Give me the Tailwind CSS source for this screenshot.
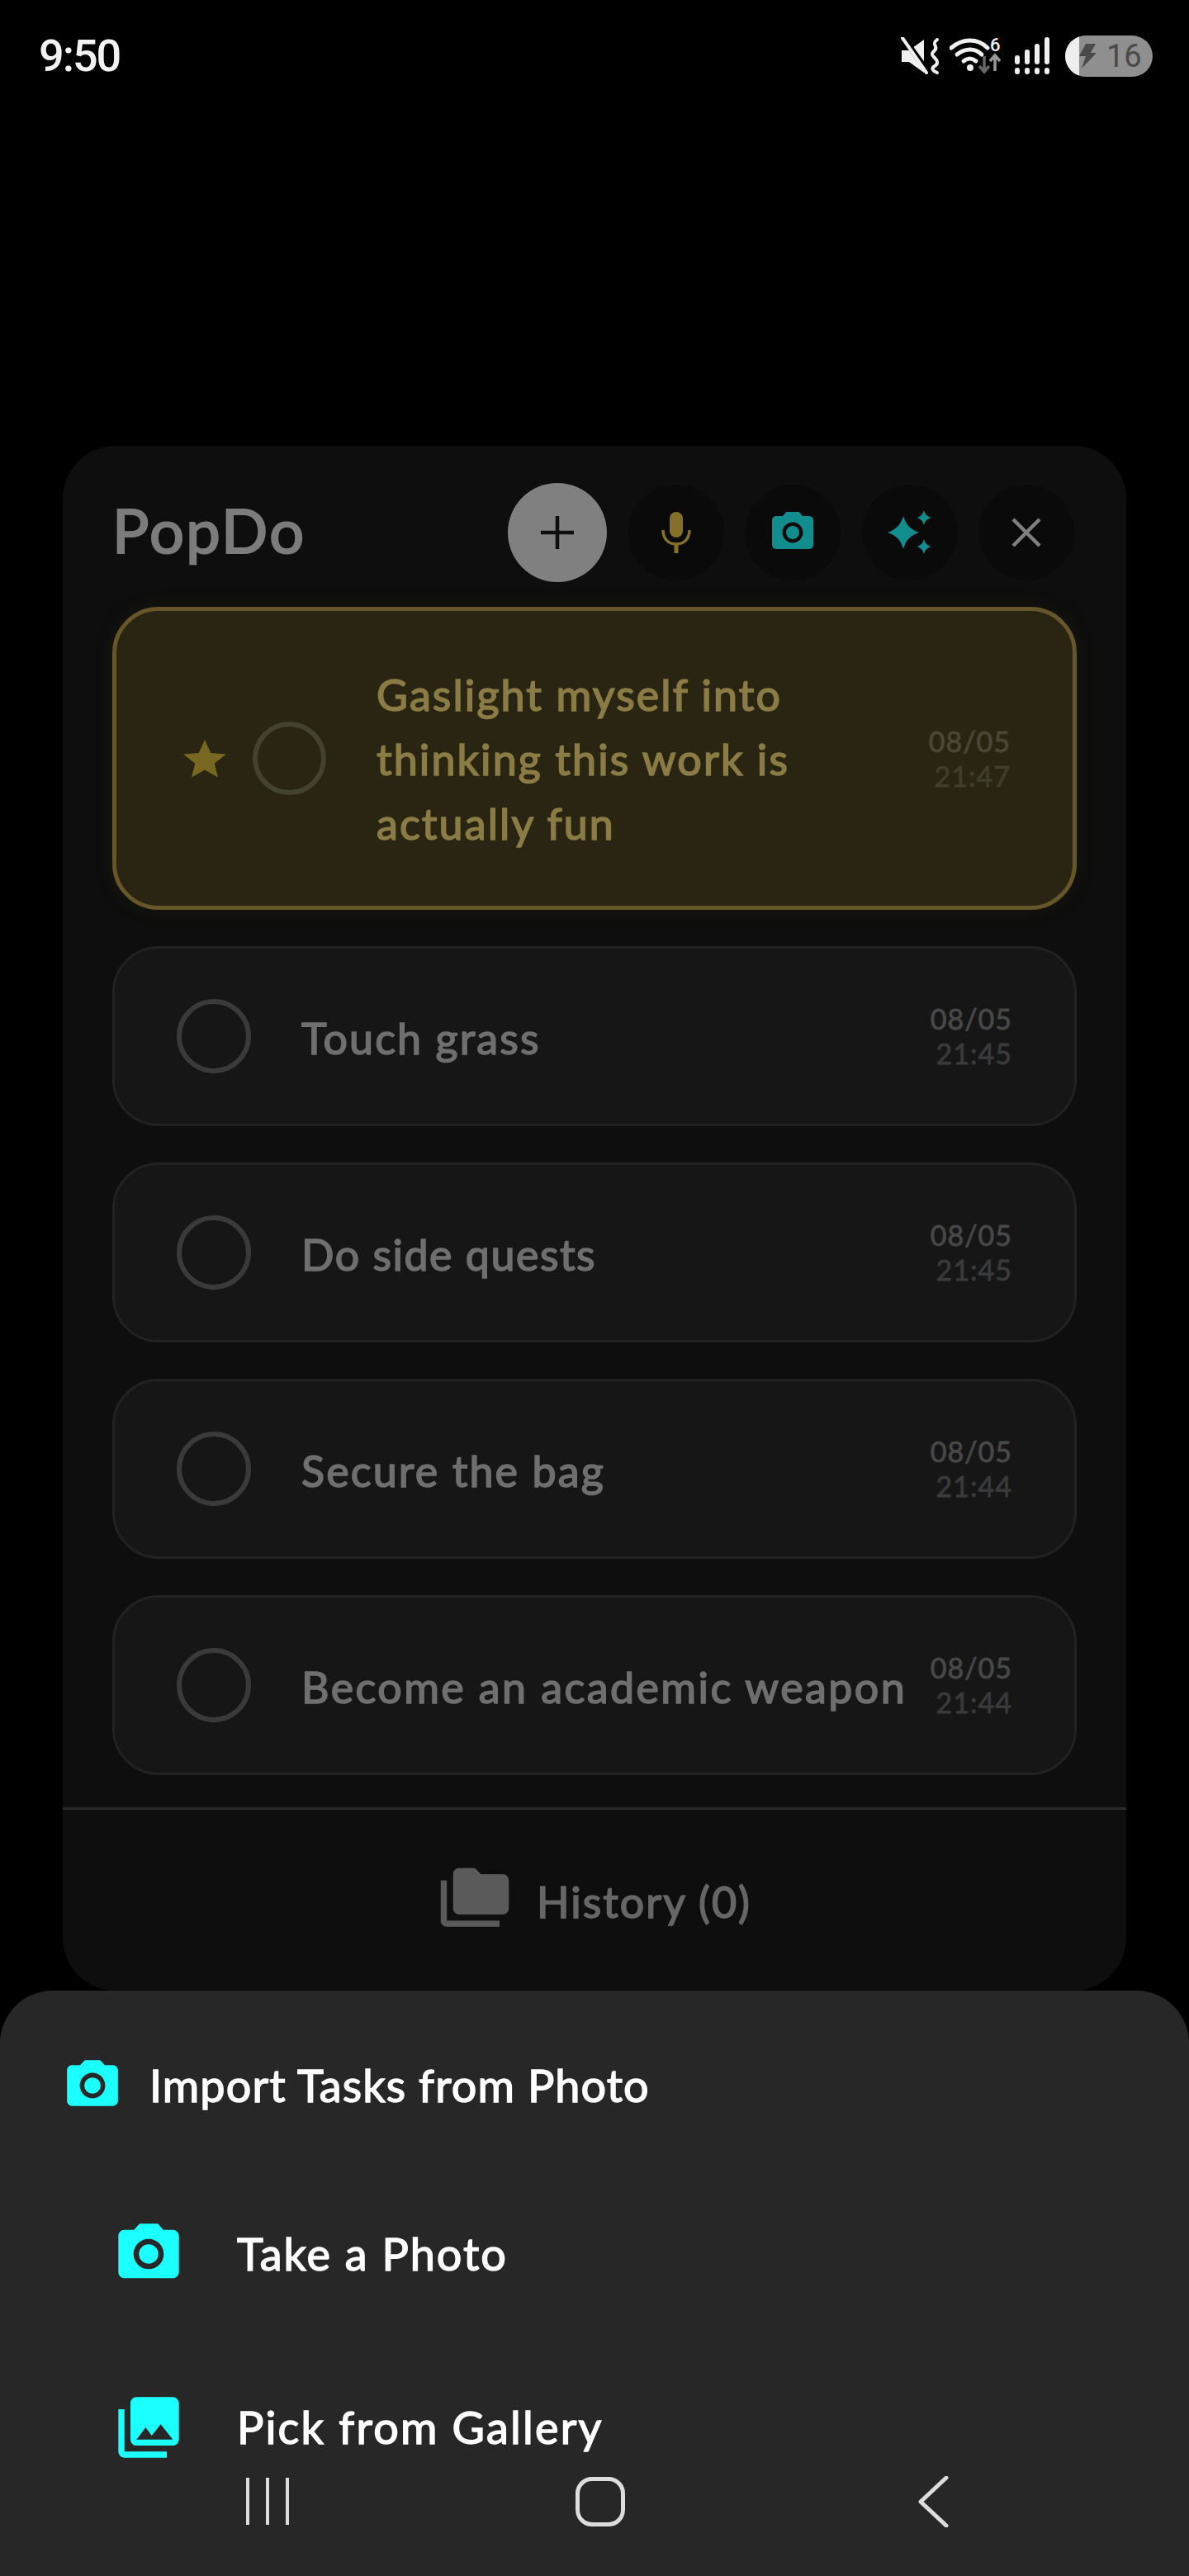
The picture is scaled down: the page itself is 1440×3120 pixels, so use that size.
<!DOCTYPE html>
<html lang="en">
<head>
  <meta charset="UTF-8" />
  <meta name="viewport" content="width=device-width, initial-scale=1.0" />
  <title>PopDo</title>
  <script src="https://cdn.jsdelivr.net/npm/@tailwindcss/browser@4"></script>
</head>
<body class="bg-black font-['Lato','Noto_Sans',sans-serif]">
  <div class="relative w-[1440px] h-[3120px] overflow-hidden bg-black flex flex-col">

    <!-- status bar -->
    <div class="h-[540px] shrink-0">
      <div class="flex items-center justify-between pl-[47px] pr-[44px] pt-[43px] h-[92px]">
        <span class="font-['Roboto',sans-serif] font-medium text-[54px] leading-none text-[#f2f2f2] tracking-[-2px]">9:50</span>
        <div class="flex items-center">
          <svg class="w-[48px] h-[46px]" viewBox="0 0 48 46" fill="none">
            <path d="M1 16h9L28 3v40L10 30H1z" fill="#f0f0f0"/>
            <path d="M4 2l26 36" stroke="#000" stroke-width="7"/>
            <path d="M2 1l29 42" stroke="#f0f0f0" stroke-width="4" stroke-linecap="round"/>
            <path d="M44 3c-8 6 2 8-3 13s-3 6 0 9 5 7 0 10-2 6 3 8" stroke="#f0f0f0" stroke-width="4" stroke-linecap="round"/>
          </svg>
          <div class="ml-[11px] relative w-[64px] h-[48px]">
            <svg class="w-[64px] h-[48px]" viewBox="0 0 64 48" fill="none">
              <path d="M2 14c14-12 32-12 44 0" stroke="#f0f0f0" stroke-width="5" stroke-linecap="round"/>
              <path d="M9 22c10-8 22-8 30 0" stroke="#f0f0f0" stroke-width="5" stroke-linecap="round"/>
              <path d="M17 30c5-4 10-4 15 0" stroke="#f0f0f0" stroke-width="5" stroke-linecap="round"/>
              <circle cx="25" cy="38" r="4" fill="#f0f0f0"/>
              <path d="M42 24v18M36 36l6 7 6-7" stroke="#666" stroke-width="3.5"/>
              <path d="M55 42V24M49 30l6-7 6 7" stroke="#9a9a9a" stroke-width="3.5"/>
            </svg>
            <span class="absolute left-[49px] top-[-1px] font-['Roboto',sans-serif] font-medium text-[22px] leading-[24px] text-[#f0f0f0]">6</span>
          </div>
          <svg class="ml-[14px] w-[44px] h-[46px]" viewBox="0 0 44 46" fill="#f0f0f0">
            <rect x="1" y="22" width="6" height="11" rx="3"/><rect x="1" y="37" width="6" height="8" rx="3"/>
            <rect x="13" y="15" width="6" height="18" rx="3"/><rect x="13" y="37" width="6" height="8" rx="3"/>
            <rect x="25" y="8" width="6" height="25" rx="3"/><rect x="25" y="37" width="6" height="8" rx="3"/>
            <rect x="37" y="0" width="6" height="33" rx="3"/><rect x="37" y="37" width="6" height="8" rx="3"/>
          </svg>
          <div class="ml-[18px] relative w-[106px] h-[50px] rounded-full bg-[#8f8f8f] overflow-hidden flex items-center pl-[16px] gap-[12px]">
            <div class="absolute left-0 top-0 bottom-0 w-[17px] bg-[#eeeeee]"></div>
            <svg class="relative w-[22px] h-[30px]" viewBox="0 0 22 30" fill="#4a4a4a"><path d="M9 0h12l-6 11h7L4 30l5-15H1z"/></svg>
            <span class="font-['Roboto',sans-serif] text-[38px] leading-none text-[#4a4a4a]">16</span>
          </div>
        </div>
      </div>
    </div>

    <!-- PopDo card -->
    <div class="ml-[76px] w-[1288px] h-[1871px] shrink-0 rounded-[64px] bg-[#0e0e0e] flex flex-col">
      <div class="h-[195px] shrink-0 pt-[45px] pl-[60px] pr-[63px] flex items-start justify-between">
        <span class="mt-[3px] text-[74px] leading-[108px] text-[#7c7c7c] tracking-[2.4px] [-webkit-text-stroke:2.2px_currentColor]">PopDo</span>
        <div class="flex items-center gap-[25.5px]">
          <button class="w-[120px] h-[120px] rounded-full bg-[#808080] flex items-center justify-center">
            <svg class="w-[42px] h-[42px]" viewBox="0 0 42 42"><path d="M21 1v40M1 21h40" stroke="#0e0e0e" stroke-width="4.5"/></svg>
          </button>
          <button class="w-[116px] h-[116px] rounded-full bg-[#0a0a0a] flex items-center justify-center">
            <svg class="w-[36px] h-[50px]" viewBox="0 0 36 50" fill="none">
              <rect x="10" y="0" width="16" height="31" rx="8" fill="#85702a"/>
              <path d="M2 22c0 11 7 17 16 17s16-6 16-17" stroke="#85702a" stroke-width="3.5"/>
              <path d="M18 38v12" stroke="#85702a" stroke-width="5"/>
            </svg>
          </button>
          <button class="w-[116px] h-[116px] rounded-full bg-[#0a0a0a] flex items-center justify-center">
            <svg class="w-[60px] h-[60px]" viewBox="0 0 24 24" fill="#118d8e"><circle cx="12" cy="12" r="3.2"/><path d="M9 2L7.17 4H4c-1.1 0-2 .9-2 2v12c0 1.1.9 2 2 2h16c1.1 0 2-.9 2-2V6c0-1.1-.9-2-2-2h-3.17L15 2H9zm3 15c-2.76 0-5-2.24-5-5s2.24-5 5-5 5 2.24 5 5-2.24 5-5 5z"/></svg>
          </button>
          <button class="w-[116px] h-[116px] rounded-full bg-[#0a0a0a] flex items-center justify-center">
            <svg class="w-[54px] h-[54px]" viewBox="0 0 54 54" fill="#118d8e">
              <path d="M19 7c3 10 8 16 19 20-11 4-16 9-19 20-3-11-8-16-19-20 11-4 16-10 19-20z"/>
              <path d="M44 0c1.5 5 3.5 7.5 9 9-5.5 1.5-7.5 4-9 9-1.5-5-3.5-7.5-9-9 5.5-1.5 7.5-4 9-9z"/>
              <path d="M44 35c1.5 5 3.5 7.5 9 9-5.5 1.5-7.5 4-9 9-1.5-5-3.5-7.5-9-9 5.5-1.5 7.5-4 9-9z"/>
            </svg>
          </button>
          <button class="w-[116px] h-[116px] rounded-full bg-[#0a0a0a] flex items-center justify-center">
            <svg class="w-[36px] h-[36px]" viewBox="0 0 36 36"><path d="M2 2l32 32M34 2L2 34" stroke="#808080" stroke-width="4.5"/></svg>
          </button>
        </div>
      </div>

      <div class="px-[60px] flex flex-col gap-[44px]">
        <!-- starred task -->
        <div class="h-[367px] rounded-[56px] border-[5px] border-[#665629] bg-[#2a2512] shadow-[0_0_24px_rgba(95,80,37,0.12)] flex items-center pl-[80px] pr-[75px]">
          <svg class="w-[54px] h-[50px] shrink-0" viewBox="0 0 24 24" preserveAspectRatio="none" fill="#776720"><path d="M12 1l3.2 7.6 8.3.7-6.3 5.4 1.9 8.1L12 18.5l-7.1 4.3 1.9-8.1L.5 9.3l8.3-.7z"/></svg>
          <div class="ml-[31px] w-[89px] h-[89px] rounded-full border-[6px] border-[#43412f] shrink-0"></div>
          <div class="ml-[61px] flex-1 text-[52px] leading-[78px] text-[#8a7c45] tracking-[2.1px] [-webkit-text-stroke:1.6px_currentColor]">Gaslight myself into<br>thinking this work is<br>actually fun</div>
          <div class="text-right text-[34px] leading-[42px] tracking-[1px] text-[#4a4737] [-webkit-text-stroke:0.8px_currentColor]">08/05<br><span class="text-[#3f3d2c]">21:47</span></div>
        </div>

        <!-- tasks -->
        <div class="h-[218px] rounded-[56px] border-[3px] border-[#222222] bg-[#161616] flex items-center pl-[75px] pr-[75px]">
          <div class="w-[90px] h-[90px] rounded-full border-[6px] border-[#3a3a3a] shrink-0"></div>
          <div class="ml-[61px] flex-1 pt-[3px] text-[52px] leading-[78px] text-[#6f6f6f] tracking-[2.1px] [-webkit-text-stroke:1.6px_currentColor]">Touch grass</div>
          <div class="text-right text-[34px] leading-[42px] tracking-[1px] text-[#484848] [-webkit-text-stroke:0.8px_currentColor]">08/05<br><span class="text-[#3a3a3a]">21:45</span></div>
        </div>
        <div class="h-[218px] rounded-[56px] border-[3px] border-[#222222] bg-[#161616] flex items-center pl-[75px] pr-[75px]">
          <div class="w-[90px] h-[90px] rounded-full border-[6px] border-[#3a3a3a] shrink-0"></div>
          <div class="ml-[61px] flex-1 pt-[3px] text-[52px] leading-[78px] text-[#6f6f6f] tracking-[1.5px] [-webkit-text-stroke:1.6px_currentColor]">Do side quests</div>
          <div class="text-right text-[34px] leading-[42px] tracking-[1px] text-[#484848] [-webkit-text-stroke:0.8px_currentColor]">08/05<br><span class="text-[#3a3a3a]">21:45</span></div>
        </div>
        <div class="h-[218px] rounded-[56px] border-[3px] border-[#222222] bg-[#161616] flex items-center pl-[75px] pr-[75px]">
          <div class="w-[90px] h-[90px] rounded-full border-[6px] border-[#3a3a3a] shrink-0"></div>
          <div class="ml-[61px] flex-1 pt-[3px] text-[52px] leading-[78px] text-[#6f6f6f] tracking-[2.1px] [-webkit-text-stroke:1.6px_currentColor]">Secure the bag</div>
          <div class="text-right text-[34px] leading-[42px] tracking-[1px] text-[#484848] [-webkit-text-stroke:0.8px_currentColor]">08/05<br><span class="text-[#3a3a3a]">21:44</span></div>
        </div>
        <div class="h-[218px] rounded-[56px] border-[3px] border-[#222222] bg-[#161616] flex items-center pl-[75px] pr-[75px]">
          <div class="w-[90px] h-[90px] rounded-full border-[6px] border-[#3a3a3a] shrink-0"></div>
          <div class="ml-[61px] flex-1 pt-[3px] text-[52px] leading-[78px] text-[#6f6f6f] tracking-[2.4px] [-webkit-text-stroke:1.6px_currentColor] whitespace-nowrap">Become an academic weapon</div>
          <div class="text-right text-[34px] leading-[42px] tracking-[1px] text-[#484848] [-webkit-text-stroke:0.8px_currentColor]">08/05<br><span class="text-[#3a3a3a]">21:44</span></div>
        </div>
      </div>

      <div class="mt-[39px] border-t-[3px] border-[#2a2a2a] h-[218px] flex items-center justify-center gap-[30px]">
        <svg class="w-[90px] h-[90px]" viewBox="0 0 24 24" fill="#5a5a5a"><path d="M3 19h17v2H3c-1.1 0-2-.9-2-2V6h2v13zM23 6v9c0 1.1-.9 2-2 2H7c-1.1 0-2-.9-2-2L5.01 4C5.01 2.9 5.9 2 7 2h5l2 2h7c1.1 0 2 .9 2 2z"/></svg>
        <span class="pt-[7px] text-[52px] leading-[78px] text-[#666666] tracking-[2px] [-webkit-text-stroke:1.6px_currentColor]">History (0)</span>
      </div>
    </div>

    <!-- import sheet -->
    <div class="flex-1 rounded-t-[64px] bg-[#272727] text-white">
      <div class="flex items-center pl-[75px] pt-[77px] h-[153px]">
        <svg class="w-[74px] h-[74px]" viewBox="0 0 24 24" fill="#1bffff"><circle cx="12" cy="12" r="3.2"/><path d="M9 2L7.17 4H4c-1.1 0-2 .9-2 2v12c0 1.1.9 2 2 2h16c1.1 0 2-.9 2-2V6c0-1.1-.9-2-2-2h-3.17L15 2H9zm3 15c-2.76 0-5-2.24-5-5s2.24-5 5-5 5 2.24 5 5-2.24 5-5 5z"/></svg>
        <span class="ml-[32px] text-[54px] leading-[78px] tracking-[1.1px] [-webkit-text-stroke:1.4px_currentColor]">Import Tasks from Photo</span>
      </div>
      <div class="flex items-center pl-[136px] mt-[122px] h-[88px]">
        <svg class="w-[88px] h-[88px]" viewBox="0 0 24 24" fill="#1bffff"><circle cx="12" cy="12" r="3.2"/><path d="M9 2L7.17 4H4c-1.1 0-2 .9-2 2v12c0 1.1.9 2 2 2h16c1.1 0 2-.9 2-2V6c0-1.1-.9-2-2-2h-3.17L15 2H9zm3 15c-2.76 0-5-2.24-5-5s2.24-5 5-5 5 2.24 5 5-2.24 5-5 5z"/></svg>
        <span class="ml-[63px] text-[54px] leading-[78px] tracking-[2px] [-webkit-text-stroke:1.4px_currentColor]">Take a Photo</span>
      </div>
      <div class="flex items-center pl-[136px] mt-[122px] h-[88px]">
        <svg class="w-[88px] h-[88px]" viewBox="0 0 24 24" fill="#1bffff"><path d="M22 16V4c0-1.1-.9-2-2-2H8c-1.1 0-2 .9-2 2v12c0 1.1.9 2 2 2h12c1.1 0 2-.9 2-2zm-11-4l2.03 2.71L16 11l4 5H8l3-4zM2 6v14c0 1.1.9 2 2 2h14v-2H4V6H2z"/></svg>
        <span class="ml-[63px] text-[54px] leading-[78px] tracking-[2.2px] [-webkit-text-stroke:1.4px_currentColor]">Pick from Gallery</span>
      </div>
    </div>

    <!-- android nav -->
    <div class="absolute left-0 right-0 top-[2999px] h-[61px] flex items-center">
      <div class="ml-[298px] flex gap-[20px] h-[57px]">
        <div class="w-[4px] bg-[#dddddd]"></div>
        <div class="w-[4px] bg-[#dddddd]"></div>
        <div class="w-[4px] bg-[#dddddd]"></div>
      </div>
      <div class="ml-[347px] w-[60px] h-[60px] rounded-[20px] border-[5px] border-[#dddddd]"></div>
      <svg class="ml-[354px] w-[38px] h-[62px]" viewBox="0 0 38 62" fill="none"><path d="M35 2L4 31l31 29" stroke="#dddddd" stroke-width="5" stroke-linecap="round" stroke-linejoin="round"/></svg>
    </div>
  </div>
</body>
</html>
